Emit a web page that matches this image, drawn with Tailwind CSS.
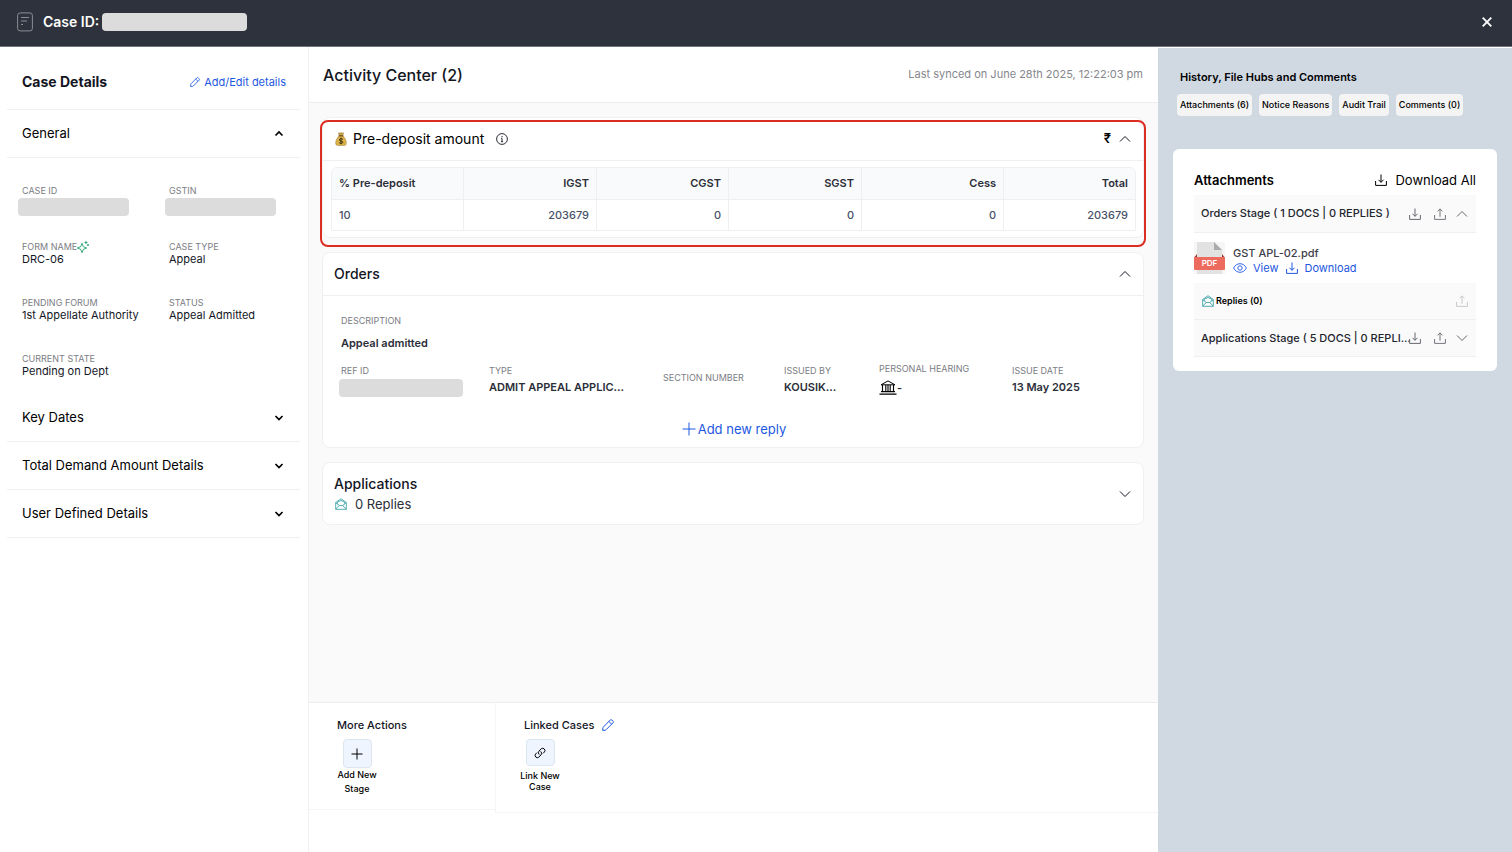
<!DOCTYPE html>
<html lang="en">
<head>
<meta charset="utf-8">
<meta name="viewport" content="width=device-width, initial-scale=1">
<title>Case details</title>
<script src="https://cdn.jsdelivr.net/npm/@tailwindcss/browser@4"></script>
</head>
<body class="flex min-h-screen flex-col bg-white font-['Inter',sans-serif] text-[#14161f]">

<svg class="hidden" aria-hidden="true">
  <symbol id="up" viewBox="0 0 12 12"><path d="M1 8.500 6 3.500l5 5" fill="none" stroke="currentColor"/></symbol>
  <symbol id="down" viewBox="0 0 12 12"><path d="M1 3.500l5 5 5-5" fill="none" stroke="currentColor"/></symbol>
  <symbol id="up-bold" viewBox="0 0 10 10"><path d="M1.500 6.500 5 3l3.500 3.500" fill="none" stroke="currentColor" stroke-width="1.700"/></symbol>
  <symbol id="down-bold" viewBox="0 0 10 10"><path d="M1.500 3 5 6.500 8.500 3" fill="none" stroke="currentColor" stroke-width="1.700"/></symbol>
  <symbol id="download" viewBox="0 0 12 12"><path d="M.6 7v4.400h10.800V7M6 .5v7.800M3.500 5.800 6 8.300l2.500-2.500" fill="none" stroke="currentColor"/></symbol>
  <symbol id="upload" viewBox="0 0 12 12"><path d="M.6 7v4.400h10.800V7M6 8.800V.9M3.500 3.400 6 .9l2.500 2.500" fill="none" stroke="currentColor" stroke-width=".9"/></symbol>
  <symbol id="pencil" viewBox="0 0 12 12"><path d="M8.300.9a1 1 0 0 1 1.400 0l1.400 1.400a1 1 0 0 1 0 1.400L4 10.800a2 2 0 0 1-1 .5l-2.300.1.200-2.300a2 2 0 0 1 .5-1.100zM6.800 2.400l2.800 2.800" fill="none" stroke="currentColor" stroke-width="1" stroke-linejoin="round"/></symbol>
  <symbol id="mail" viewBox="0 0 12 12"><path d="M.7 4.500 6 .7l5.300 3.800v6.800H.7zM.7 4.700 4.300 7.500h3.400l3.600-2.800M.7 11.100l3.600-3.600M11.300 11.100 7.700 7.500M2.300 5.700V4.200L6 2.400l3.700 1.800v1.500" fill="none" stroke="currentColor" stroke-width=".8" stroke-linejoin="round"/></symbol>
</svg>

<header class="flex h-[47px] shrink-0 items-center border-b border-[#70747d] bg-[#2e323c] pr-5 pb-[2px] pl-[17px] text-white">
  <svg class="mr-[10px] h-5 w-4 text-[#8b8e95]" viewBox="0 0 16 20" fill="none" stroke="currentColor"><rect x=".6" y=".9" width="14.800" height="18" rx="2.500"/><path d="M4 5.500h8M4 9h6M4 12.500h2"/></svg>
  <h1 class="text-sm font-semibold">Case ID:</h1>
  <span class="ml-[3px] h-[18px] w-[145px] rounded bg-[#dcdcdc]"></span>
  <button class="ml-auto" aria-label="Close"><svg class="size-[10px]" viewBox="0 0 10 10" stroke="currentColor" stroke-width="1.800"><path d="M.7.7l8.600 8.600M9.300.7.7 9.300"/></svg></button>
</header>

<div class="flex grow">
  <aside class="w-[309px] shrink-0 border-r border-[#f0f0f0] pr-2 pl-[7px]">
    <div class="flex h-[63px] items-center justify-between border-b border-[#f0f0f0] pt-2 pr-[14px] pl-[15px]">
      <h2 class="text-sm font-bold">Case Details</h2>
      <button class="flex items-center gap-1 text-[11px] text-[#1d58e0]"><svg class="size-[10px]"><use href="#pencil"/></svg>Add/Edit details</button>
    </div>
    <button class="flex h-12 w-full items-center justify-between border-b border-[#f0f0f0] pr-4 pl-[15px] text-[13px] text-black">General<svg class="size-[10px]"><use href="#up-bold"/></svg></button>
    <dl class="grid auto-rows-[41px] grid-cols-[147px_1fr] gap-y-[15px] pt-[27px] pl-[15px] text-[11px] leading-3">
      <div><dt class="text-[9px] leading-3 text-[#7b7d84]">CASE ID</dt><dd class="-ml-1 mt-px h-[18px] w-[111px] rounded bg-[#dcdcdc]"></dd></div>
      <div><dt class="text-[9px] leading-3 text-[#7b7d84]">GSTIN</dt><dd class="-ml-1 mt-px h-[18px] w-[111px] rounded bg-[#dcdcdc]"></dd></div>
      <div><dt class="flex items-end text-[9px] leading-3 text-[#7b7d84]">FORM NAME<svg class="size-3 text-[#22a06b]" viewBox="0 0 12 12" fill="none" stroke="currentColor" stroke-width=".9" stroke-linejoin="round"><path d="M5 2.300 6.300 5.700 9.700 7 6.300 8.300 5 11.700 3.700 8.300.3 7l3.400-1.300zM9 0v3M7.500 1.500h3M11 3v2M10 4h2"/></svg></dt><dd>DRC-06</dd></div>
      <div><dt class="text-[9px] leading-3 text-[#7b7d84]">CASE TYPE</dt><dd>Appeal</dd></div>
      <div><dt class="text-[9px] leading-3 text-[#7b7d84]">PENDING FORUM</dt><dd>1st Appellate Authority</dd></div>
      <div><dt class="text-[9px] leading-3 text-[#7b7d84]">STATUS</dt><dd>Appeal Admitted</dd></div>
      <div><dt class="text-[9px] leading-3 text-[#7b7d84]">CURRENT STATE</dt><dd>Pending on Dept</dd></div>
    </dl>
    <button class="flex h-12 w-full items-center justify-between border-b border-[#f0f0f0] pr-4 pl-[15px] text-[13px] text-black">Key Dates<svg class="size-[10px]"><use href="#down-bold"/></svg></button>
    <button class="flex h-12 w-full items-center justify-between border-b border-[#f0f0f0] pr-4 pl-[15px] text-[13px] text-black">Total Demand Amount Details<svg class="size-[10px]"><use href="#down-bold"/></svg></button>
    <button class="flex h-12 w-full items-center justify-between border-b border-[#f0f0f0] pr-4 pl-[15px] text-[13px] text-black">User Defined Details<svg class="size-[10px]"><use href="#down-bold"/></svg></button>
  </aside>

  <main class="flex min-w-0 grow flex-col">
    <div class="flex h-14 items-center justify-between border-b border-[#ededed] pr-[15px] pl-[14px]">
      <h2 class="text-base font-medium">Activity Center (2)</h2>
      <p class="text-[11px] text-[#85878c]">Last synced on June 28th 2025, 12:22:03 pm</p>
    </div>

    <div class="flex grow flex-col gap-[14px] bg-[#fafafa] pt-[14px] pr-[14px] pl-[13px]">
      <section class="relative rounded-lg border border-[#f0f0f0] bg-white">
        <div class="pointer-events-none absolute -inset-x-[3px] top-[2px] -bottom-[10px] rounded-lg border-2 border-[#dc2d22]"></div>
        <div class="flex h-[43px] items-center border-b border-[#f0f0f0] px-3">
          <svg class="h-[14px] w-3" viewBox="0 0 12 14"><path d="M3.500.8 5 1.300 6 .5l1 .8L8.500.8 7.800 3.500H4.200z" fill="#cfa746" stroke="#8a6a27" stroke-width=".5"/><path d="M4 4h4c2 2 3.300 4.500 3.300 7 0 1.800-.8 2.500-2.300 2.500H3C1.500 13.500.7 12.800.7 11c0-2.500 1.300-5 3.300-7z" fill="#dcb348" stroke="#9a782e" stroke-width=".5"/><path d="M3.600 3.800h4.800" stroke="#6b4a1d"/><path d="M7.900 7.300C7 6.400 4.300 6.500 4.300 7.900c0 1.500 3.600.8 3.600 2.300 0 1.400-2.900 1.500-3.800.4M6 5.700v6.600" fill="none" stroke="#30260f" stroke-width=".9"/></svg>
          <h3 class="ml-[6px] text-sm text-black">Pre-deposit amount</h3>
          <button class="ml-3" aria-label="About pre-deposit"><svg class="size-3" viewBox="0 0 12 12" fill="none" stroke="currentColor" stroke-width=".9"><circle cx="6" cy="6" r="5.400"/><path d="M5.200 5.300H6v3.400M5 8.700h2M6 3v1.200"/></svg></button>
          <span class="ml-auto text-[13px] font-semibold text-black">₹</span>
          <button class="ml-2" aria-label="Collapse pre-deposit"><svg class="size-3"><use href="#up"/></svg></button>
        </div>
        <div class="py-[6px] pr-[7px] pl-2">
          <table class="w-full table-fixed border-separate border-spacing-0 rounded-t-md border border-[#efeff1] text-right text-[11px]">
            <colgroup><col class="w-[132px]"><col class="w-[133px]"><col class="w-[132px]"><col class="w-[133px]"><col class="w-[142px]"><col></colgroup>
            <thead class="bg-[#f9fafb] text-[#2b2e38]">
              <tr class="h-8">
                <th class="rounded-tl-md border-r border-b border-[#efeff1] px-[7px] text-left font-semibold">% Pre-deposit</th>
                <th class="border-r border-b border-[#efeff1] px-[7px] font-semibold">IGST</th>
                <th class="border-r border-b border-[#efeff1] px-[7px] font-semibold">CGST</th>
                <th class="border-r border-b border-[#efeff1] px-[7px] font-semibold">SGST</th>
                <th class="border-r border-b border-[#efeff1] px-[7px] font-semibold">Cess</th>
                <th class="rounded-tr-md border-b border-[#efeff1] px-[7px] font-semibold">Total</th>
              </tr>
            </thead>
            <tbody class="font-medium text-[#475069]">
              <tr class="h-[30px]">
                <td class="border-r border-[#efeff1] px-[7px] text-left">10</td>
                <td class="border-r border-[#efeff1] px-[7px]">203679</td>
                <td class="border-r border-[#efeff1] px-[7px]">0</td>
                <td class="border-r border-[#efeff1] px-[7px]">0</td>
                <td class="border-r border-[#efeff1] px-[7px]">0</td>
                <td class="px-[7px]">203679</td>
              </tr>
            </tbody>
          </table>
        </div>
      </section>

      <section class="rounded-lg border border-[#f0f0f0] bg-white">
        <div class="flex h-[43px] items-center justify-between border-b border-[#f0f0f0] pr-3 pl-[11px]">
          <h3 class="text-sm font-medium">Orders</h3>
          <button aria-label="Collapse orders"><svg class="size-3"><use href="#up"/></svg></button>
        </div>
        <div class="flex h-[151px] flex-col pt-[18px] pl-[18px]">
          <p class="text-[9px] leading-[14px] text-[#7b7d84]">DESCRIPTION</p>
          <p class="mt-2 text-[11px] leading-[14px] font-semibold text-[#2b2e38]">Appeal admitted</p>
          <dl class="mt-3 grid h-9 grid-cols-[148fr_174fr_121fr_95fr_133fr_131fr] text-[11px] leading-[14px] font-semibold text-[#2b2e38]">
            <div class="pt-[2px]"><dt class="text-[9px] leading-[14px] font-normal text-[#7b7d84]">REF ID</dt><dd class="-ml-[2px] mt-px h-[18px] w-[124px] rounded bg-[#dcdcdc]"></dd></div>
            <div class="pt-[2px]"><dt class="text-[9px] leading-[14px] font-normal text-[#7b7d84]">TYPE</dt><dd class="mt-[2px] whitespace-nowrap">ADMIT APPEAL APPLIC...</dd></div>
            <div class="pt-[9px]"><dt class="text-[9px] leading-[14px] font-normal text-[#7b7d84]">SECTION NUMBER</dt></div>
            <div class="pt-[2px]"><dt class="text-[9px] leading-[14px] font-normal text-[#7b7d84]">ISSUED BY</dt><dd class="mt-[2px] whitespace-nowrap">KOUSIK...</dd></div>
            <div><dt class="text-[9px] leading-[14px] font-normal text-[#7b7d84]">PERSONAL HEARING</dt><dd class="mt-1 flex items-center"><svg class="h-[15px] w-[18px] text-black" viewBox="0 0 18 15" fill="none" stroke="currentColor"><path d="M2 4.800 9 .9l7 3.900z" stroke-linejoin="round"/><path d="M3.500 5v6.500M6.800 5v6.500M9 5v6.500M11.200 5v6.500M14.500 5v6.500" stroke-width="1.100"/><path d="M2 11.700h14M.5 14.200h17" stroke-width="1.200"/></svg>-</dd></div>
            <div class="pt-[2px]"><dt class="text-[9px] leading-[14px] font-normal text-[#7b7d84]">ISSUE DATE</dt><dd class="mt-[2px] whitespace-nowrap">13 May 2025</dd></div>
          </dl>
          <button class="mt-[21px] mr-4 flex items-center gap-[2px] self-center text-[13px] leading-5 text-[#1d58e0]"><svg class="size-[14px]" viewBox="0 0 14 14" stroke="currentColor"><path d="M.5 7h13M7 .5v13"/></svg>Add new reply</button>
        </div>
      </section>

      <section class="flex h-[63px] items-center justify-between rounded-lg border border-[#f0f0f0] bg-white pr-3 pl-[11px]">
        <div>
          <h3 class="text-sm leading-5 font-medium">Applications</h3>
          <p class="flex items-center gap-2 pl-px text-[13px] leading-5 text-[#2b2e38]"><svg class="size-3 text-[#2a9aa0]"><use href="#mail"/></svg>0 Replies</p>
        </div>
        <button aria-label="Expand applications"><svg class="size-3"><use href="#down"/></svg></button>
      </section>
    </div>

    <footer class="flex h-[150px] shrink-0 items-start border-t border-[#ededed]">
      <section class="h-[107px] w-[186px] border-b border-[#f5f5f5] pt-[14px] pl-7">
        <h3 class="text-[11px] leading-4 font-medium">More Actions</h3>
        <button class="mt-[6px] flex w-10 flex-col items-center text-[9px] leading-[14px] font-medium text-black"><span class="flex size-[29px] items-center justify-center rounded-sm border border-[#dce5f0] bg-[#eff5fe]"><svg class="size-3" viewBox="0 0 12 12" stroke="currentColor"><path d="M.5 6h11M6 .5v11"/></svg></span>Add New Stage</button>
      </section>
      <section class="h-[110px] grow border-b border-l border-[#f5f5f5] pt-[14px] pl-6">
        <h3 class="flex items-center gap-2 pl-1 text-[11px] leading-4 font-medium">Linked Cases<button class="text-[#1d58e0]" aria-label="Edit linked cases"><svg class="size-3"><use href="#pencil"/></svg></button></h3>
        <button class="mt-[6px] flex w-10 flex-col items-center text-[9px] leading-[11px] font-medium text-black"><span class="mb-1 flex h-[27px] w-[29px] items-center justify-center rounded-sm border border-[#dce5f0] bg-[#eff5fe]"><svg class="size-3" viewBox="0 0 12 12" fill="none" stroke="currentColor" stroke-width="1" stroke-linecap="round"><path d="M5 7.300a2.300 2.300 0 0 1 0-3.200L7.300 1.700a2.300 2.300 0 0 1 3.200 3.200L9.300 6.100M7 4.700a2.300 2.300 0 0 1 0 3.200l-2.300 2.400a2.300 2.300 0 0 1-3.200-3.200l1.200-1.200"/></svg></span>Link New Case</button>
      </section>
    </footer>
  </main>

  <aside class="w-[354px] shrink-0 border-t border-white bg-[#d0d8e2] px-[15px]">
    <h2 class="pt-[21px] pl-[7px] text-[11px] leading-4 font-semibold text-black">History, File Hubs and Comments</h2>
    <nav class="mt-[9px] flex gap-[7px] pl-1 text-[9px] font-medium whitespace-nowrap text-black">
      <button class="h-[22px] rounded bg-[#f4f4f4] px-[3px]">Attachments (6)</button>
      <button class="h-[22px] rounded bg-[#f4f4f4] px-[3px]">Notice Reasons</button>
      <button class="h-[22px] rounded bg-[#f4f4f4] px-[3px]">Audit Trail</button>
      <button class="h-[22px] rounded bg-[#f4f4f4] px-[3px]">Comments (0)</button>
    </nav>
    <section class="mt-[33px] rounded-md bg-white px-[21px] pt-5 pb-[14px]">
      <div class="flex h-[26px] items-start justify-between text-[13px] leading-[22px] text-black">
        <h3 class="font-semibold">Attachments</h3>
        <button class="flex items-center gap-2"><svg class="size-3"><use href="#download"/></svg>Download All</button>
      </div>
      <div class="flex h-[38px] items-center border-b border-[#efefef] bg-[#fafafa] pr-2 pl-[7px] text-[11px] font-medium text-[#22252e]">
        <span class="min-w-0 grow whitespace-nowrap">Orders Stage ( 1 DOCS | 0 REPLIES )</span>
        <span class="flex shrink-0 items-center text-[#666870]">
          <button class="mr-[13px]" aria-label="Download orders"><svg class="size-3"><use href="#download"/></svg></button>
          <button class="mr-[10px]" aria-label="Upload orders"><svg class="size-3"><use href="#upload"/></svg></button>
          <button aria-label="Collapse orders stage"><svg class="size-3"><use href="#up"/></svg></button>
        </span>
      </div>
      <div class="flex h-[50px] items-center gap-2">
        <svg class="h-8 w-[31px] shrink-0" viewBox="0 0 31 32"><path fill="#f6f6f6" d="M0 0h31v32H0z"/><path fill="#e2e2e2" d="M3 0h17l8 8v24H3z"/><path fill="#aaa" d="M20 0l8 8h-8z"/><path fill="#9b2f2a" d="M0 16l3-4v4zM31 16l-3-4v4z"/><rect y="15" width="31" height="13" rx="1" fill="#ec6a5e"/><text x="15.500" y="24" text-anchor="middle" font-size="8" font-weight="600" fill="#fff">PDF</text></svg>
        <div class="pt-[5px] text-[11px] leading-[15px]">
          <p class="font-medium text-[#3d4048]">GST APL-02.pdf</p>
          <p class="flex items-center text-[#1d58e0]">
            <a href="#" class="mr-2 flex items-center gap-[6px]"><svg class="h-3 w-[14px]" viewBox="0 0 14 12" fill="none" stroke="currentColor" stroke-width=".9"><path d="M.6 6C2 3.300 4.300 1.700 7 1.700S12 3.300 13.400 6C12 8.700 9.700 10.300 7 10.300S2 8.700.6 6z"/><circle cx="7" cy="6" r="2.200"/></svg>View</a>
            <a href="#" class="flex items-center gap-[6px]"><svg class="size-3"><use href="#download"/></svg>Download</a>
          </p>
        </div>
      </div>
      <div class="flex h-[37px] items-center border-b border-[#efefef] bg-[#fafafa] pr-2 pl-2 text-[9px] font-semibold text-black">
        <svg class="mr-[2px] size-3 text-[#2a9aa0]"><use href="#mail"/></svg>Replies (0)
        <button class="ml-auto text-[#c4c5c8]" aria-label="Upload reply"><svg class="size-3"><use href="#upload"/></svg></button>
      </div>
      <div class="flex h-[37px] items-center border-b border-[#efefef] bg-[#fafafa] pr-2 pl-[7px] text-[11px] font-medium text-[#22252e]">
        <span class="min-w-0 grow whitespace-nowrap">Applications Stage ( 5 DOCS | 0 REPLI...</span>
        <span class="flex shrink-0 items-center text-[#666870]">
          <button class="mr-[13px]" aria-label="Download applications"><svg class="size-3"><use href="#download"/></svg></button>
          <button class="mr-[10px]" aria-label="Upload applications"><svg class="size-3"><use href="#upload"/></svg></button>
          <button aria-label="Expand applications stage"><svg class="size-3"><use href="#down"/></svg></button>
        </span>
      </div>
    </section>
  </aside>
</div>
</body>
</html>
